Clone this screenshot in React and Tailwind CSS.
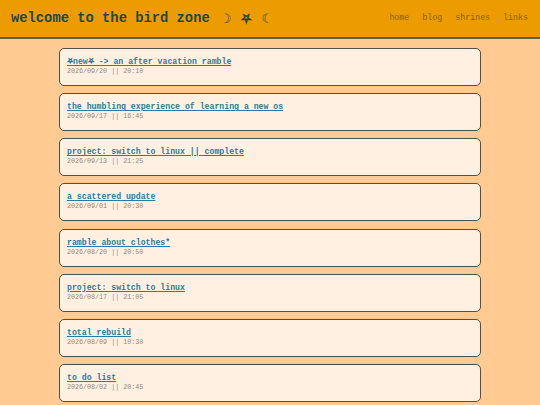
import React from "react";

const posts = [
  { t: "⛧new⛧ -> an after vacation ramble", d: "2026/09/20 || 20:10" },
  { t: "the humbling experience of learning a new os", d: "2026/09/17 || 16:45" },
  { t: "project: switch to linux || complete", d: "2026/09/13 || 21:25" },
  { t: "a scattered update", d: "2026/09/01 || 20:30" },
  { t: "ramble about clothes*", d: "2026/08/20 || 20:50" },
  { t: "project: switch to linux", d: "2026/08/17 || 21:05" },
  { t: "total rebuild", d: "2026/08/09 || 10:30" },
  { t: "to do list", d: "2026/08/02 || 20:45" },
];

export default function App() {
  return (
    <div
      className="min-h-[405px] bg-[#ffcb93]"
      style={{ fontFamily: '"Liberation Mono", "DejaVu Sans Mono", monospace' }}
    >
      <header className="h-[39px] bg-[#ed9c00] border-b-2 border-[#5e6040] flex items-center justify-between pl-[11px] pr-[12px]">
        <h1 className="text-[13.8px] font-bold text-[#1d4848] leading-none flex items-center">
          <span>welcome to the bird zone</span>
          <span
            className="ml-[10px] flex items-center gap-[10px] text-[13px]"
            style={{ fontFamily: '"DejaVu Sans", sans-serif' }}
          >
            <span>☽</span>
            <span>⛧</span>
            <span>☾</span>
          </span>
        </h1>
        <nav className="flex gap-[13px] text-[8.3px] text-[#8a5c10] leading-none">
          <span>home</span>
          <span>blog</span>
          <span>shrines</span>
          <span>links</span>
        </nav>
      </header>
      <main className="w-[422px] mx-auto pt-[9px] flex flex-col gap-[7.15px]">
        {posts.map((p, i) => (
          <div
            key={i}
            className="h-[38px] shrink-0 bg-[#fff0e1] border border-[#4f5347] rounded-[5px] px-[7px] pt-[8px]"
          >
            <div className="text-[8.2px] leading-[10px] h-[10px] font-bold text-[#2b7c9c] underline">
              {p.t}
            </div>
            <div className="text-[6.7px] leading-[8px] text-[#8d8a84]">{p.d}</div>
          </div>
        ))}
      </main>
    </div>
  );
}
